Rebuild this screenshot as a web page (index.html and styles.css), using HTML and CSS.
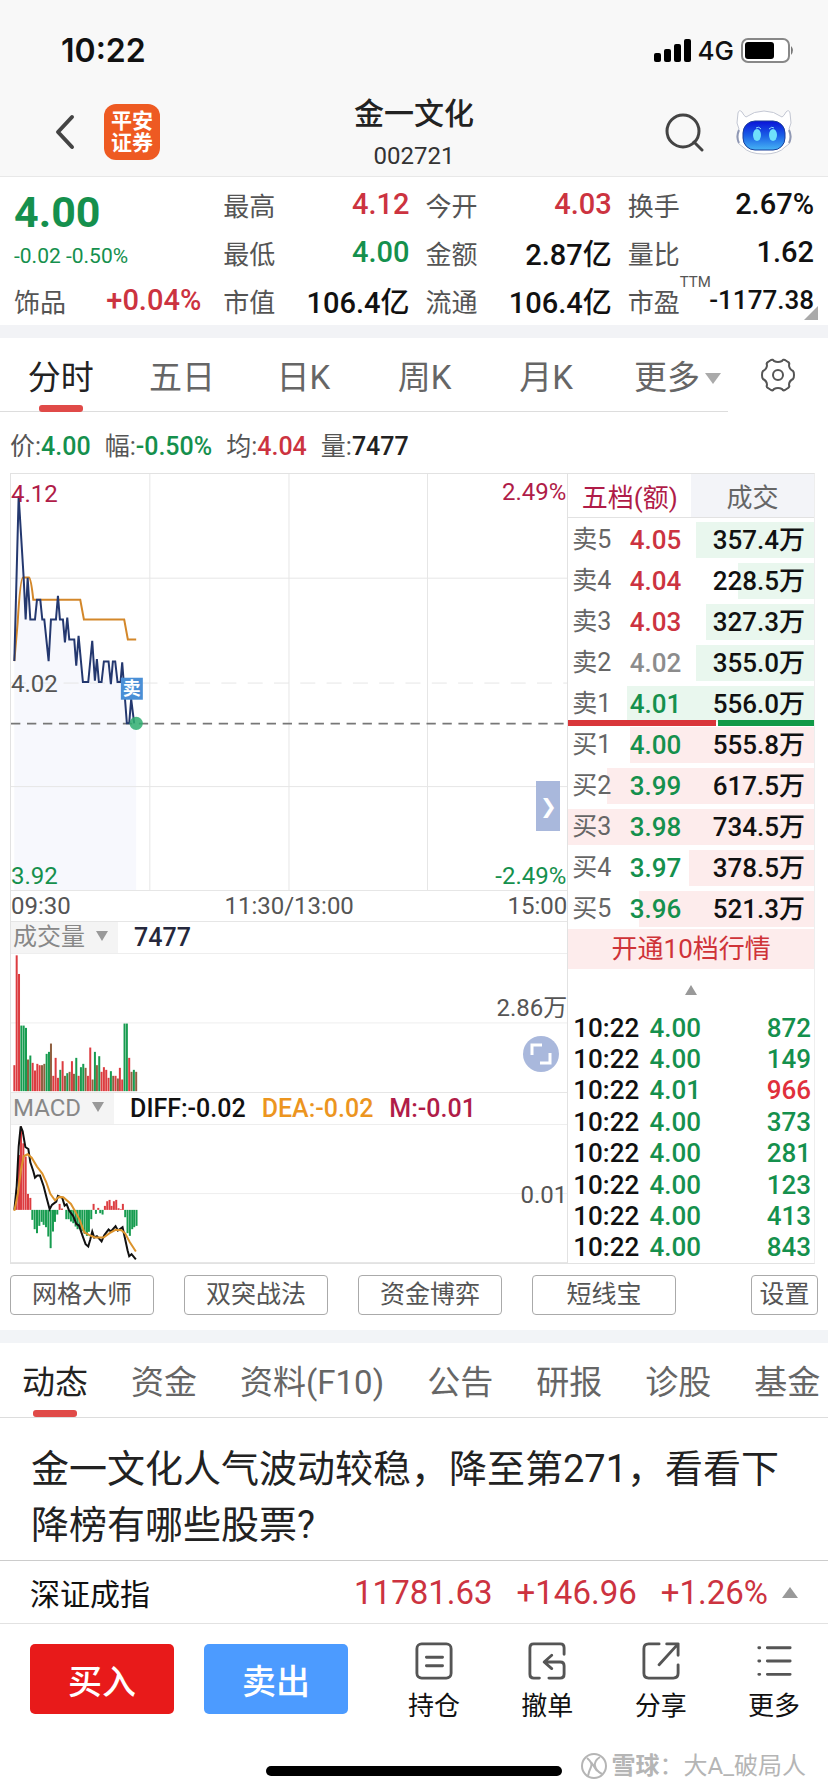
FILE: index.html
```html
<!DOCTYPE html>
<html lang="zh-CN">
<head>
    <meta charset="UTF-8">
    <meta name="viewport" content="width=device-width, initial-scale=1.0">
    <title>金一文化 002721</title>
    <link rel="stylesheet" href="styles.css">
</head>
<body>

<header class="top">
    <div class="status">
        <span class="clock">10:22</span>
        <span class="signal">
            <svg width="37" height="23" viewBox="0 0 37 23"><rect x="0" y="14" width="7" height="9" rx="2"/><rect x="10" y="10" width="7" height="13" rx="2"/><rect x="20" y="5" width="7" height="18" rx="2"/><rect x="30" y="0" width="7" height="23" rx="2"/></svg>
            <span>4G</span>
            <svg width="54" height="25" viewBox="0 0 54 25"><rect x="1" y="1" width="47" height="23" rx="6" fill="#fff" stroke="#888" stroke-width="2"/><rect x="4" y="4" width="29" height="17" rx="3"/><path d="M50 8q4 4 0 9z" fill="#777"/></svg>
        </span>
    </div>
    <nav class="nav">
        <div class="nav-left">
            <button class="icon-button" aria-label="返回"><svg width="20" height="36" viewBox="0 0 20 36" fill="none" stroke="#444" stroke-width="4" stroke-linecap="round" stroke-linejoin="round"><path d="M17 3 3 18l14 15"/></svg></button>
            <span class="logo"><span>平安</span><span>证券</span></span>
        </div>
        <div class="title">
            <h1>金一文化</h1>
            <span>002721</span>
        </div>
        <div class="nav-right">
            <button class="icon-button" aria-label="搜索"><svg width="39" height="39" viewBox="0 0 39 39" fill="none" stroke="#444" stroke-width="3" stroke-linecap="round"><circle cx="18" cy="18" r="16"/><path d="m29 29 8 8"/></svg></button>
            <button class="icon-button" aria-label="智能助手">
                <svg width="56" height="46" viewBox="0 0 56 46">
                    <defs>
                        <linearGradient id="face" x1="0" y1="0" x2="0" y2="1"><stop offset="0" stop-color="#0a12d8"/><stop offset=".5" stop-color="#1a5fe6"/><stop offset="1" stop-color="#46b4f4"/></linearGradient>
                    </defs>
                    <path d="M2 4Q3 0 6 3q2 4 4 5Q18 2 28 2t18 6q2-1 4-5 3-3 4 1l1 10-2 6q4 8 0 15l-4 3q-6 7-21 7T7 38l-4-3q-4-7 0-15l-2-6z" fill="#fff" stroke="#c3c7d3"/>
                    <path d="M3 21q-3 7 0 13M53 21q3 7 0 13" fill="none" stroke="#8f98b4" stroke-width="2"/>
                    <rect x="7" y="12" width="42" height="29" rx="12" fill="url(#face)" stroke="#1a3f9a"/>
                    <ellipse cx="21" cy="26" rx="4" ry="6" fill="#6fe0fb"/><ellipse cx="37" cy="26" rx="4" ry="6" fill="#6fe0fb"/>
                    <path d="M20 19q3-2 5 1M33 20q3-3 5-1" stroke="#8fdcff" fill="none"/>
                </svg>
            </button>
        </div>
    </nav>
</header>

<section class="quote">
    <div class="quote-main">
        <strong class="price green">4.00</strong>
        <span class="change green">-0.02 -0.50%</span>
        <div class="pair"><span>饰品</span><b class="red">+0.04%</b></div>
    </div>
    <div class="quote-col">
        <div class="pair"><span>最高</span><b class="red">4.12</b></div>
        <div class="pair"><span>最低</span><b class="green">4.00</b></div>
        <div class="pair"><span>市值</span><b>106.4亿</b></div>
    </div>
    <div class="quote-col">
        <div class="pair"><span>今开</span><b class="red">4.03</b></div>
        <div class="pair"><span>金额</span><b>2.87亿</b></div>
        <div class="pair"><span>流通</span><b>106.4亿</b></div>
    </div>
    <div class="quote-col">
        <div class="pair"><span>换手</span><b>2.67%</b></div>
        <div class="pair"><span>量比</span><b>1.62</b></div>
        <div class="pair pe"><span>市盈<sup>TTM</sup></span><b class="small">-1177.38</b></div>
    </div>
</section>

<nav class="period">
    <div class="period-tabs">
        <button class="tab active">分时</button>
        <button class="tab">五日</button>
        <button class="tab">日K</button>
        <button class="tab">周K</button>
        <button class="tab">月K</button>
        <button class="tab more">更多<i class="down"></i></button>
    </div>
    <button class="icon-button gear" aria-label="图表设置">
        <svg width="34" height="34" viewBox="0 0 34 34" fill="none" stroke="#555" stroke-width="2" stroke-linejoin="round"><circle cx="17" cy="17" r="5"/><path d="M10 2q2-1 3 1 4 2 8 0 1-2 3-1l3 2q2 1 1 3 0 4 4 6 1 1 1 4t-1 4q-4 2-4 6 1 2-1 3l-3 2q-2 1-3-1-4-2-8 0-1 2-3 1l-3-2q-2-1-1-3 0-4-4-6-1-1-1-4t1-4q4-2 4-6-1-2 1-3z"/></svg>
    </button>
</nav>

<div class="info">
    <span>价:<b class="green">4.00</b></span>
    <span>幅:<b class="green">-0.50%</b></span>
    <span>均:<b class="red">4.04</b></span>
    <span>量:<b>7477</b></span>
</div>

<main class="market">
    <div class="charts">
        <!-- 分时图 -->
        <div class="chart">
            <svg viewBox="30 24 1671 1251">
                <path d="M40 586 53 90 68 335 74 461 80 336 88 461H102L108 402H118L124 461H130L143 586 150 461H165L171 390 177 461H186L192 530 199 455 205 521H220L226 600 233 510 246 649H262L274 525 282 645 288 580 294 649H302L309 587H323L330 655 336 587H343L350 649H359L364 590 378 773H385L391 700 400 773H406V1278H40Z" fill="#f7f8fd"/>
                <g stroke="#e6e6e6" stroke-width="3" fill="none">
                    <path d="M447 24V1278M865 24V1278M1281 24V1278M30 337H1701M30 963H1701"/>
                    <path d="M30 652H1701" stroke-dasharray="45 34"/>
                </g>
                <path d="M30 774H1701" stroke="#777" stroke-width="5" stroke-dasharray="28 20"/>
                <path d="M40 586 50 470Q58 336 66 335H84Q90 337 97 402H238L249 461H370L381 521H406" fill="none" stroke="#d3872a" stroke-width="6"/>
                <path d="M40 586 53 90 68 335 74 461 80 336 88 461H102L108 402H118L124 461H130L143 586 150 461H165L171 390 177 461H186L192 530 199 455 205 521H220L226 600 233 510 246 649H262L274 525 282 645 288 580 294 649H302L309 587H323L330 655 336 587H343L350 649H359L364 590 378 773H385L391 700 400 773" fill="none" stroke="#24386f" stroke-width="6"/>
                <rect x="360" y="636" width="66" height="66" fill="#4a8fd6"/>
                <text x="393" y="688" class="mark">卖</text>
                <circle cx="406" cy="773" r="20" fill="#2fae70" fill-opacity=".85"/>
            </svg>
            <span class="label top-left crimson">4.12</span>
            <span class="label top-right crimson">2.49%</span>
            <span class="label middle-left">4.02</span>
            <span class="label bottom-left green">3.92</span>
            <span class="label bottom-right green">-2.49%</span>
            <button class="expand" aria-label="展开">❯</button>
        </div>
        <div class="times"><span>09:30</span><span>11:30/13:00</span><span>15:00</span></div>

        <!-- 成交量 -->
        <div class="sub-head"><button class="picker">成交量<i class="down"></i></button><b class="navy">7477</b></div>
        <div class="chart">
            <svg viewBox="30 221 1671 414">
                <path d="M30 428H1701" stroke="#eee" stroke-width="3"/>
                <g id="volumeBars"></g>
            </svg>
            <span class="label volume-max">2.86万</span>
            <button class="fullscreen" aria-label="全屏"><svg width="36" height="36" viewBox="0 0 36 36"><circle cx="18" cy="18" r="18" fill="#a9b8dc"/><path d="M9 19V9h10M17 27h10V17" fill="none" stroke="#fff" stroke-width="3"/></svg></button>
        </div>

        <!-- MACD -->
        <div class="sub-head"><button class="picker">MACD<i class="down"></i></button><b>DIFF:-0.02</b><b class="orange">DEA:-0.02</b><b class="crimson">M:-0.01</b></div>
        <div class="chart">
            <svg viewBox="30 736 1671 411">
                <path d="M30 942H1701" stroke="#eee" stroke-width="3"/>
                <g id="macdBars"></g>
                <path d="M40 991 47 920 53 800 59 740 65 755 73 802 82 808 88 848 97 875 102 894 109 888H117L128 920 137 955 146 989 153 976 166 966 171 949 184 955 191 978 197 974 204 992 217 1010 226 1033 234 1038 246 1072 254 1094 262 1101 268 1080 274 1056 280 1074 288 1070 302 1086 310 1067 323 1050 330 1056 344 1040 351 1053 365 1043 371 1070 380 1112 385 1130 392 1124 405 1140" fill="none" stroke="#111" stroke-width="6"/>
                <path d="M40 994 51 940 60 870 68 830 80 824 92 834 108 861 124 882 136 908 148 943 162 962 174 952 187 953 210 973 222 994 236 1021 250 1058 264 1066 282 1074 308 1074 326 1061 344 1051 362 1052 373 1062 387 1088 405 1116" fill="none" stroke="#dc932c" stroke-width="6"/>
            </svg>
            <span class="label macd-mid">0.01</span>
        </div>
    </div>

    <aside class="book">
        <div class="book-tabs">
            <button class="active">五档(额)</button>
            <button>成交</button>
        </div>
        <div class="orders">
            <table>
                <tbody class="sell">
                    <tr style="--bar: 48%"><th scope="row">卖5</th><td class="red">4.05</td><td>357.4万</td></tr>
                    <tr style="--bar: 31%"><th scope="row">卖4</th><td class="red">4.04</td><td>228.5万</td></tr>
                    <tr style="--bar: 44%"><th scope="row">卖3</th><td class="red">4.03</td><td>327.3万</td></tr>
                    <tr style="--bar: 48%"><th scope="row">卖2</th><td class="gray">4.02</td><td>355.0万</td></tr>
                    <tr style="--bar: 76%"><th scope="row">卖1</th><td class="green">4.01</td><td>556.0万</td></tr>
                </tbody>
                <tbody class="buy">
                    <tr style="--bar: 75%"><th scope="row">买1</th><td class="green">4.00</td><td>555.8万</td></tr>
                    <tr style="--bar: 84%"><th scope="row">买2</th><td class="green">3.99</td><td>617.5万</td></tr>
                    <tr style="--bar: 100%"><th scope="row">买3</th><td class="green">3.98</td><td>734.5万</td></tr>
                    <tr style="--bar: 51%"><th scope="row">买4</th><td class="green">3.97</td><td>378.5万</td></tr>
                    <tr style="--bar: 71%"><th scope="row">买5</th><td class="green">3.96</td><td>521.3万</td></tr>
                </tbody>
            </table>
            <div class="ratio"><i style="width: 60%"></i><i></i></div>
        </div>
        <a class="upgrade" href="#">开通10档行情</a>
        <button class="fold" aria-label="收起"><i class="up"></i></button>
        <table class="trades">
            <tbody>
                <tr><td>10:22</td><td>4.00</td><td>872</td></tr>
                <tr><td>10:22</td><td>4.00</td><td>149</td></tr>
                <tr><td>10:22</td><td>4.01</td><td class="bright">966</td></tr>
                <tr><td>10:22</td><td>4.00</td><td>373</td></tr>
                <tr><td>10:22</td><td>4.00</td><td>281</td></tr>
                <tr><td>10:22</td><td>4.00</td><td>123</td></tr>
                <tr><td>10:22</td><td>4.00</td><td>413</td></tr>
                <tr><td>10:22</td><td>4.00</td><td>843</td></tr>
            </tbody>
        </table>
    </aside>
</main>

<div class="tools">
    <button>网格大师</button>
    <button>双突战法</button>
    <button>资金博弈</button>
    <button>短线宝</button>
    <button class="config">设置</button>
</div>

<nav class="news-tabs">
    <button class="tab active">动态</button>
    <button class="tab">资金</button>
    <button class="tab">资料(F10)</button>
    <button class="tab">公告</button>
    <button class="tab">研报</button>
    <button class="tab">诊股</button>
    <button class="tab">基金</button>
</nav>

<a class="news" href="#">金一文化人气波动较稳，降至第271，看看下降榜有哪些股票?</a>

<div class="index">
    <span class="index-name">深证成指</span>
    <b>11781.63</b><b>+146.96</b><b>+1.26%</b><i class="up"></i>
</div>

<footer class="actions">
    <button class="trade buy-button">买入</button>
    <button class="trade sell-button">卖出</button>
    <div class="links">
        <button class="action">
            <svg viewBox="0 0 40 40"><rect x="2" y="2" width="36" height="36" rx="5"/><path d="M12 16h17M12 25h17"/></svg>
            持仓
        </button>
        <button class="action">
            <svg viewBox="0 0 40 40"><path d="M12 38H6q-4 0-4-4V6q0-4 4-4h28q4 0 4 4v7M25 14l-8 7 8 7M18 21h16q4 0 4 4v9q0 4-4 4H22"/></svg>
            撤单
        </button>
        <button class="action">
            <svg viewBox="0 0 40 40"><path d="M18 2H7Q2 2 2 7v26q0 5 5 5h26q5 0 5-5V24M26 2h12v12M38 2 18 24"/></svg>
            分享
        </button>
        <button class="action">
            <svg viewBox="0 0 40 40"><path d="M13 6h24M13 20h24M13 34h24M4 6h1M4 20h1M4 34h1"/></svg>
            更多
        </button>
    </div>
</footer>

<div class="home">
    <div class="home-bar"></div>
    <div class="watermark">
        <svg width="28" height="28" viewBox="0 0 28 28" fill="none" stroke="#b5b5b5" stroke-width="2"><circle cx="14" cy="14" r="12"/><path d="M7 6q6 5 4 9t-3 9M20 5q-6 4-5 9t7 8M11 10l6 9"/></svg>
        <span><b>雪球</b>：大A_破局人</span>
    </div>
</div>

<script>
    const volume = [
        [78, 'r'], [408, 'r'], [352, 'r'], [197, 'g'], [197, 'g'], [190, 'g'], [95, 'm'], [107, 'g'], [85, 'r'],
        [62, 'r'], [82, 'r'], [78, 'r'], [78, 'm'], [82, 'm'], [112, 'g'], [118, 'g'], [143, 'm'], [46, 'r'],
        [100, 'r'], [40, 'r'], [64, 'g'], [90, 'r'], [46, 'm'], [54, 'g'], [58, 'm'], [90, 'r'], [52, 'm'],
        [100, 'g'], [46, 'r'], [72, 'g'], [82, 'g'], [70, 'm'], [46, 'r'], [131, 'r'], [35, 'm'], [118, 'g'],
        [78, 'm'], [105, 'g'], [58, 'r'], [72, 'r'], [64, 'r'], [40, 'r'], [60, 'g'], [46, 'm'], [46, 'r'],
        [38, 'm'], [70, 'r'], [35, 'r'], [203, 'g'], [203, 'g'], [100, 'r'], [58, 'm'], [64, 'g'], [58, 'm']
    ];
    const macd = [
        0, 60, 165, 250, 200, 160, 48, 36, -30, -58, -70, -48, -36, -45, -52, -80, -115, -65, -36, -14, 18, 4, 0,
        -28, -28, -35, -40, -50, -58, -56, -64, -72, -78, -66, -28, 18, -12, 6, -10, -14, 12, 26, 30, 12, 26, 30,
        5, 2, 18, -22, -70, -78, -58, -52, -48
    ];
    const colors = { r: '#dc3c40', g: '#179c50', m: '#8f6040' };

    function bar(x, y, height, color) {
        return `<rect x="${x}" y="${y}" width="6" height="${height}" fill="${color}"/>`;
    }

    document.getElementById('volumeBars').innerHTML = volume
        .map(([height, type], i) => bar(37 + Math.round(i * 6.9), 633 - height, height, colors[type]))
        .join('');

    document.getElementById('macdBars').innerHTML = macd
        .map((value, i) => bar(37 + Math.round(i * 6.8), value > 0 ? 991 - value : 991, Math.abs(value), value > 0 ? colors.r : colors.g))
        .join('');
</script>

</body>
</html>
```
FILE: styles.css
```css
* {
    box-sizing: border-box;
}
body {
    margin: 0;
    background-color: #fff;
    color: #111;
    font-family: Roboto, "Noto Sans CJK SC", sans-serif;
    font-size: 26px;
}
button {
    padding: 0;
    border: none;
    background: none;
    color: inherit;
    font: inherit;
    cursor: pointer;
}
a {
    color: inherit;
    text-decoration: none;
}
b {
    font-weight: 500;
}
svg {
    display: block;
}
table {
    width: 100%;
    border-collapse: collapse;
}
th, td {
    padding: 0;
}
.red {
    color: #cc3340;
}
.bright {
    color: #e0303c;
}
.crimson {
    color: #b01c48;
}
.green {
    color: #15904d;
}
.orange {
    color: #ec951f;
}
.gray {
    color: #8c8c8c;
}
.navy {
    color: #26283c;
}
.down, .up {
    display: inline-block;
    border: 8px solid transparent;
    border-width: 0 8px;
}
.down {
    border-top: 11px solid #aaa;
}
.up {
    border-bottom: 11px solid #999;
}

/* header */
.top {
    background-color: #f8f8f8;
    border-bottom: 1px solid #e8e8e8;
}
.status {
    display: flex;
    justify-content: space-between;
    align-items: center;
    height: 88px;
    padding: 12px 33px 0 61px;
}
.clock {
    font: 600 32px Inter, sans-serif;
}
.signal {
    display: flex;
    align-items: center;
    gap: 7px;
    font: 500 26px Inter, sans-serif;
}
.nav {
    display: grid;
    grid-template-columns: 1fr auto 1fr;
    align-items: center;
    height: 88px;
    padding: 0 36px 0 55px;
}
.nav-left {
    display: flex;
    align-items: center;
    gap: 29px;
}
.nav-right {
    display: flex;
    justify-content: flex-end;
    align-items: center;
    gap: 32px;
}
.logo {
    display: grid;
    align-content: center;
    justify-content: center;
    width: 56px;
    height: 56px;
    border-radius: 12px;
    background-color: #ee5a22;
    color: #fff;
    font-size: 21px;
    font-weight: 700;
    line-height: 22px;
}
.title {
    margin-left: -19px;
    text-align: center;
    color: #333;
    font-size: 24px;
    line-height: 36px;
}
.title h1 {
    margin: 0;
    color: #222;
    font-size: 30px;
    font-weight: 500;
    line-height: 48px;
}

/* quote */
.quote {
    display: grid;
    grid-template-columns: 193fr 186fr 186fr 186fr;
    gap: 16px;
    padding: 3px 14px 1px;
    border-bottom: 13px solid #f2f3f6;
}
.quote-main {
    display: flex;
    flex-direction: column;
}
.price {
    font-size: 43px;
    line-height: 64px;
}
.change {
    font-size: 21px;
    line-height: 24px;
}
.quote-main .pair {
    margin-top: 8px;
    padding-right: 6px;
}
.pair {
    display: flex;
    justify-content: space-between;
    align-items: center;
    height: 48px;
    color: #555;
    white-space: nowrap;
}
.pair b {
    font-size: 29px;
    color: #111;
}
.pair .red {
    color: #cc3340;
}
.pair .green {
    color: #15904d;
}
.pair .small {
    font-size: 26px;
}
.pe {
    position: relative;
}
.pe sup {
    position: absolute;
    top: -4px;
    font-size: 15px;
    line-height: 20px;
}
.pe::after {
    content: "";
    position: absolute;
    right: -4px;
    bottom: 4px;
    border-left: 14px solid transparent;
    border-bottom: 14px solid #aaa;
}

/* tabs */
.tab {
    position: relative;
    height: 100%;
    color: #666;
    font-size: 33px;
    white-space: nowrap;
}
.tab.active {
    color: #222;
}
.tab.active::after {
    content: "";
    position: absolute;
    left: 50%;
    bottom: -1px;
    width: 44px;
    height: 7px;
    margin-left: -22px;
    border-radius: 3px;
    background-color: #e04a48;
}
.period {
    display: flex;
    height: 74px;
}
.period-tabs {
    display: grid;
    grid-template-columns: repeat(6, 1fr);
    flex: 1;
    border-bottom: 1px solid #ddd;
}
.period-tabs .more {
    padding-right: 7px;
    text-align: right;
}
.tab .down {
    margin: 0 0 5px 5px;
}
.gear {
    display: flex;
    justify-content: center;
    align-items: center;
    width: 100px;
}
.info {
    display: flex;
    align-items: center;
    gap: 14px;
    height: 61px;
    padding: 2px 10px 0;
    color: #555;
    font-size: 25px;
}
.info b:not([class]) {
    color: #222;
}

/* charts */
.market {
    display: grid;
    grid-template-columns: minmax(0, 558fr) minmax(0, 246fr);
    margin: 0 13px 0 10px;
    border: 1px solid #e2e2e2;
    border-right-color: #eee;
}
.charts {
    border-right: 1px solid #e2e2e2;
}
.chart {
    position: relative;
    border-bottom: 1px solid #e6e6e6;
}
.chart svg {
    width: 100%;
}
.mark {
    fill: #fff;
    font-size: 54px;
    font-weight: 700;
    text-anchor: middle;
}
.label {
    position: absolute;
    color: #555;
    font-size: 24px;
    line-height: 28px;
}
.label.green {
    color: #15904d;
}
.label.crimson {
    color: #b01c48;
}
.top-left {
    top: 6px;
    left: 0;
}
.top-right {
    top: 4px;
    right: 1px;
}
.middle-left {
    top: 47%;
    left: 0;
}
.bottom-left {
    bottom: 0;
    left: 0;
}
.bottom-right {
    right: 1px;
    bottom: 0;
}
.volume-max {
    top: 40px;
    right: 0;
}
.macd-mid {
    top: 56px;
    right: 0;
}
.expand {
    position: absolute;
    right: 7px;
    bottom: 59px;
    width: 24px;
    height: 50px;
    background-color: #a9b8dc;
    color: #fff;
    font: 20px "DejaVu Sans", sans-serif;
}
.fullscreen {
    position: absolute;
    right: 8px;
    bottom: 20px;
}
.fullscreen svg {
    width: 36px;
}
.times {
    display: flex;
    justify-content: space-between;
    border-bottom: 1px solid #e6e6e6;
    color: #555;
    font-size: 24px;
    line-height: 30px;
}
.sub-head {
    display: flex;
    align-items: center;
    gap: 16px;
    height: 32px;
    border-bottom: 1px solid #eee;
    font-size: 25px;
    line-height: 31px;
}
.picker {
    align-self: stretch;
    padding: 0 10px 0 2px;
    background-color: #f4f4f4;
    color: #888;
    font-size: 24px;
    line-height: 31px;
}
.picker .down {
    margin: 0 0 4px 11px;
    border-width: 0 6px;
    border-top: 10px solid #999;
}

/* order book */
.book {
    display: flex;
    flex-direction: column;
}
.book-tabs {
    display: flex;
    height: 44px;
    border-bottom: 1px solid #e2e2e2;
    color: #666;
}
.book-tabs button {
    flex: 1;
    background-color: #f3f4f8;
}
.book-tabs .active {
    background-color: #fff;
    color: #b01c48;
}
.orders {
    position: relative;
    padding-top: 1px;
}
.orders tr {
    height: 41px;
    background: linear-gradient(#e9f7ee, #e9f7ee) right center / var(--bar) 36px no-repeat;
}
.orders .buy tr {
    background-image: linear-gradient(#fdecec, #fdecec);
}
.orders th {
    width: 25%;
    padding-left: 4px;
    color: #666;
    font-size: 25px;
    font-weight: 400;
    line-height: 30px;
    text-align: left;
}
.orders td {
    font-size: 26px;
    font-weight: 500;
    line-height: 30px;
    text-align: left;
}
.orders td:last-child {
    padding-right: 9px;
    text-align: right;
}
.ratio {
    position: absolute;
    top: 202px;
    left: 0;
    right: 0;
    display: flex;
    gap: 2px;
    height: 6px;
}
.ratio i {
    background-color: #d9363a;
}
.ratio i:last-child {
    flex: 1;
    background-color: #119a48;
}
.upgrade {
    background-color: #fdecec;
    color: #cf3338;
    line-height: 40px;
    text-align: center;
}
.fold {
    height: 43px;
    padding-bottom: 10px;
    line-height: 30px;
}
.fold .up {
    border-width: 0 6px;
    border-bottom: 10px solid #999;
}
.trades {
    flex: 1;
}
.trades td {
    color: #15904d;
    font-size: 26px;
    font-weight: 500;
    line-height: 30px;
}
.trades td:first-child {
    width: 33%;
    padding-left: 5px;
    color: #111;
}
.trades td:last-child {
    padding-right: 3px;
    text-align: right;
}
.trades .bright {
    color: #e0303c;
}

/* tools */
.tools {
    display: flex;
    gap: 30px;
    padding: 11px 10px 15px;
    border-bottom: 13px solid #f2f4f7;
}
.tools button {
    flex: 0 1 144px;
    height: 40px;
    border: 1px solid #aaa;
    border-radius: 4px;
    color: #555;
    font-size: 25px;
    line-height: 36px;
}
.tools .config {
    flex-basis: 67px;
    margin-left: auto;
}

/* news */
.news-tabs {
    display: flex;
    gap: 43px;
    height: 75px;
    padding: 0 22px;
    overflow: hidden;
    border-bottom: 1px solid #ddd;
}
.news-tabs .tab.active::after {
    bottom: 0;
}
.news {
    display: block;
    padding: 23px 31px 7px;
    border-bottom: 1px solid #ccc;
    color: #222;
    font-size: 38px;
    line-height: 56px;
}
.index {
    display: flex;
    align-items: center;
    gap: 24px;
    height: 63px;
    padding: 0 30px;
    border-bottom: 1px solid #e2e2e2;
    font-size: 30px;
}
.index b {
    color: #cc3340;
    font-size: 33px;
    font-weight: 400;
}
.index-name {
    margin-right: auto;
}
.index .up {
    margin-left: -10px;
}

/* bottom bar */
.actions {
    display: flex;
    gap: 30px;
    padding: 20px 24px 0 30px;
}
.trade {
    flex: 0 1 144px;
    height: 70px;
    border-radius: 5px;
    color: #fff;
    font-size: 34px;
    font-weight: 500;
}
.buy-button {
    background-color: #e81a1a;
}
.sell-button {
    background-color: #4c9bff;
}
.links {
    display: flex;
    flex: 1;
    justify-content: space-between;
    padding-left: 26px;
}
.action {
    font-size: 26px;
    line-height: 36px;
    padding: 0 4px;
}
.action svg {
    width: 38px;
    height: 38px;
    margin: -2px auto 8px;
    fill: none;
    stroke: #555;
    stroke-width: 3;
    stroke-linecap: round;
    stroke-linejoin: round;
}
.home {
    display: grid;
    grid-template-columns: 1fr 296px 1fr;
    align-items: center;
    padding-top: 24px;
}
.home-bar {
    grid-column: 2;
    height: 10px;
    margin-top: 10px;
    border-radius: 5px;
    background-color: #000;
}
.watermark {
    display: flex;
    justify-content: flex-end;
    align-items: center;
    gap: 4px;
    padding-right: 22px;
    color: #b5b5b5;
    font-size: 24px;
    line-height: 36px;
    white-space: nowrap;
}
.watermark b {
    font-weight: 700;
}
```
